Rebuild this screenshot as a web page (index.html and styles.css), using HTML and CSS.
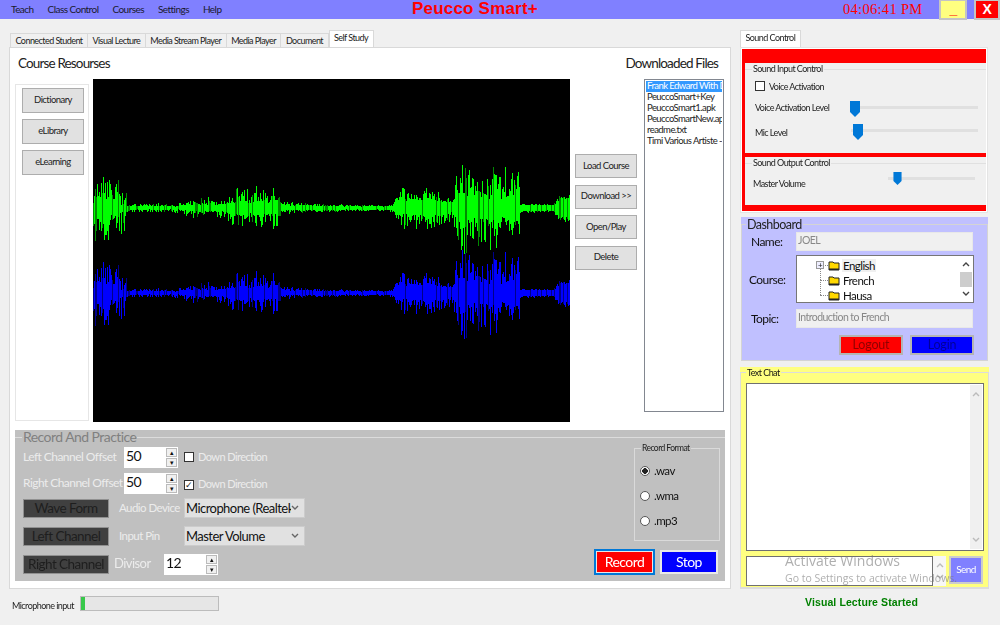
FILE: index.html
```html
<!DOCTYPE html>
<html lang="en">
<head>
    <meta charset="UTF-8">
    <title>Peucco Smart+</title>
    <link rel="stylesheet" href="styles.css">
</head>
<body>
    <svg class="defs" width="0" height="0">
        <symbol id="chev-up" viewBox="0 0 8 6"><path d="M1 5 L4 2 L7 5" fill="none" stroke="currentColor" stroke-width="1.4"/></symbol>
        <symbol id="chev-down" viewBox="0 0 8 6"><path d="M1 1 L4 4 L7 1" fill="none" stroke="currentColor" stroke-width="1.4"/></symbol>
        <symbol id="folder" viewBox="0 0 12 11"><path d="M1 2 H5 L6 3 H11 V10 H1 Z" fill="#ffd800" stroke="#222" stroke-width="1"/><path d="M1 10 H11 V8.5 H1 Z" fill="#222"/></symbol>
        <symbol id="thumb" viewBox="0 0 10 16"><path d="M0 0 H10 V11 L5 16 L0 11 Z" fill="#0078d7"/></symbol>
    </svg>

    <div class="topbar">
        <nav class="menu">
            <span>Teach</span>
            <span>Class Control</span>
            <span>Courses</span>
            <span>Settings</span>
            <span>Help</span>
        </nav>
        <div class="app-title">Peucco Smart+</div>
        <div class="clock">04:06:41 PM</div>
        <button class="win-btn win-min">_</button>
        <button class="win-btn win-close">X</button>
    </div>

    <div class="main">
        <div class="left-col">
            <div class="tabs">
                <span class="tab">Connected Student</span>
                <span class="tab">Visual Lecture</span>
                <span class="tab">Media Stream Player</span>
                <span class="tab">Media Player</span>
                <span class="tab">Document</span>
                <span class="tab active">Self Study</span>
            </div>
            <div class="tab-panel">
                <div class="headings">
                    <span>Course Resourses</span>
                    <span>Downloaded Files</span>
                </div>
                <div class="study-row">
                    <div class="side-box">
                        <button class="btn">Dictionary</button>
                        <button class="btn">eLibrary</button>
                        <button class="btn">eLearning</button>
                    </div>
                    <canvas class="wave" id="wave" width="477" height="343"></canvas>
                    <div class="file-actions">
                        <button class="btn">Load Course</button>
                        <button class="btn">Download &gt;&gt;</button>
                        <button class="btn">Open/Play</button>
                        <button class="btn">Delete</button>
                    </div>
                    <div class="file-list">
                        <div class="file selected">Frank Edward With Dr Sinach</div>
                        <div class="file">PeuccoSmart+Key</div>
                        <div class="file">PeuccoSmart1.apk</div>
                        <div class="file">PeuccoSmartNew.apk</div>
                        <div class="file">readme.txt</div>
                        <div class="file">Timi Various Artiste - Full</div>
                    </div>
                </div>
                <div class="record-wrap">
                    <fieldset class="record">
                        <legend>Record And Practice</legend>
                        <div class="record-left">
                            <div class="rec-row row-offset">
                                <span class="rec-label">Left Channel Offset</span>
                                <div class="spin"><span>50</span><div class="spin-btns"><i>&#9652;</i><i>&#9662;</i></div></div>
                                <span class="check"></span>
                                <span class="rec-label">Down Direction</span>
                            </div>
                            <div class="rec-row row-offset">
                                <span class="rec-label">Right Channel Offset</span>
                                <div class="spin"><span>50</span><div class="spin-btns"><i>&#9652;</i><i>&#9662;</i></div></div>
                                <span class="check checked">&#10003;</span>
                                <span class="rec-label">Down Direction</span>
                            </div>
                            <div class="rec-row row-select">
                                <button class="dark-btn">Wave Form</button>
                                <span class="rec-label">Audio Device</span>
                                <div class="select"><span>Microphone (Realtek</span><svg width="8" height="6"><use href="#chev-down"/></svg></div>
                            </div>
                            <div class="rec-row row-select">
                                <button class="dark-btn">Left Channel</button>
                                <span class="rec-label">Input Pin</span>
                                <div class="select"><span>Master Volume</span><svg width="8" height="6"><use href="#chev-down"/></svg></div>
                            </div>
                            <div class="rec-row row-divisor">
                                <button class="dark-btn">Right Channel</button>
                                <span class="rec-label divisor">Divisor</span>
                                <div class="spin"><span>12</span><div class="spin-btns"><i>&#9652;</i><i>&#9662;</i></div></div>
                            </div>
                        </div>
                        <div class="record-right">
                            <fieldset class="format">
                                <legend>Record Format</legend>
                                <div class="radio-row"><span class="radio on"></span>.wav</div>
                                <div class="radio-row"><span class="radio"></span>.wma</div>
                                <div class="radio-row"><span class="radio"></span>.mp3</div>
                            </fieldset>
                            <div class="rec-actions">
                                <button class="rec-btn rec-red">Record</button>
                                <button class="rec-btn rec-blue">Stop</button>
                            </div>
                        </div>
                    </fieldset>
                </div>
            </div>
            <div class="mic-row">
                <span>Microphone input</span>
                <div class="mic-bar"><div class="mic-fill" style="width: 3%"></div></div>
            </div>
        </div>

        <div class="right-col">
            <div class="tabs">
                <span class="tab active">Sound Control</span>
            </div>
            <div class="sound-panel">
                <div class="sound-red">
                    <div class="sound-group input-group">
                        <fieldset>
                            <legend>Sound Input Control</legend>
                            <div class="voice-row"><span class="check"></span>Voice Activation</div>
                            <div class="slider-row level-row">
                                <span>Voice Activation Level</span>
                                <div class="slider"><svg class="thumb" width="10" height="16"><use href="#thumb"/></svg></div>
                            </div>
                            <div class="slider-row mic-level">
                                <span>Mic Level</span>
                                <div class="slider"><svg class="thumb" width="10" height="16"><use href="#thumb"/></svg></div>
                            </div>
                        </fieldset>
                    </div>
                    <div class="sound-group output-group">
                        <fieldset>
                            <legend>Sound Output Control</legend>
                            <div class="slider-row master-row">
                                <span>Master Volume</span>
                                <div class="slider"><svg class="thumb" width="9" height="13"><use href="#thumb"/></svg></div>
                            </div>
                        </fieldset>
                    </div>
                </div>
            </div>

            <div class="dash-wrap">
                <fieldset class="dashboard">
                    <legend>Dashboard</legend>
                    <div class="dash-row name-row">
                        <span class="dash-label">Name:</span>
                        <div class="dash-input">JOEL</div>
                    </div>
                    <div class="dash-row course-row">
                        <span class="dash-label">Course:</span>
                        <div class="tree">
                            <div class="tree-items">
                                <div class="tree-item"><span class="plus">+</span><svg width="12" height="11"><use href="#folder"/></svg><span class="tree-name hover">English</span></div>
                                <div class="tree-item"><svg width="12" height="11"><use href="#folder"/></svg><span class="tree-name">French</span></div>
                                <div class="tree-item"><svg width="12" height="11"><use href="#folder"/></svg><span class="tree-name">Hausa</span></div>
                            </div>
                            <div class="tree-scroll">
                                <svg width="8" height="6"><use href="#chev-up"/></svg>
                                <div class="tree-thumb"></div>
                                <svg width="8" height="6"><use href="#chev-down"/></svg>
                            </div>
                        </div>
                    </div>
                    <div class="dash-row topic-row">
                        <span class="dash-label">Topic:</span>
                        <div class="dash-input">Introduction to French</div>
                    </div>
                    <div class="dash-actions">
                        <button class="dash-btn logout">Logout</button>
                        <button class="dash-btn login">Login</button>
                    </div>
                </fieldset>
            </div>

            <div class="chat-wrap">
                <fieldset class="chat">
                    <legend>Text Chat</legend>
                    <div class="chat-log">
                        <div class="chat-scroll">
                            <svg width="8" height="6"><use href="#chev-up"/></svg>
                            <svg width="8" height="6"><use href="#chev-down"/></svg>
                        </div>
                    </div>
                    <div class="chat-send">
                        <div class="chat-input"></div>
                        <div class="chat-scroll small">
                            <svg width="8" height="6"><use href="#chev-up"/></svg>
                            <svg width="8" height="6"><use href="#chev-down"/></svg>
                        </div>
                        <button class="send-btn">Send</button>
                    </div>
                </fieldset>
            </div>
            <div class="status">Visual Lecture Started</div>
        </div>
    </div>

    <div class="activate">
        <div class="activate-big">Activate Windows</div>
        <div class="activate-small">Go to Settings to activate Windows.</div>
    </div>

    <script src="script.js"></script>
</body>
</html>
```

FILE: styles.css
```css
* {
    box-sizing: border-box;
}
body {
    font-family: Lato, "Liberation Sans", Arial, sans-serif;
    font-size: 9px;
    letter-spacing: -0.55px;
    background-color: #f0f0f0;
    color: #222;
    margin: 0;
    width: 1000px;
    height: 625px;
    overflow: hidden;
    position: relative;
}
button {
    font-family: inherit;
    letter-spacing: inherit;
    padding: 0 0 2px;
}
fieldset {
    margin: 0;
    min-width: 0;
    border: 1px solid #dcdcdc;
}
legend {
    padding: 0 1px;
}
.defs {
    position: absolute;
}

/* top bar */
.topbar {
    height: 19px;
    background-color: #8080ff;
    display: flex;
    align-items: flex-start;
    position: relative;
}
.menu {
    display: flex;
    gap: 14px;
    padding: 3px 0 0 11px;
    width: 412px;
    font-size: 10px;
    color: #1a1a2e;
}
.app-title {
    font-family: "Liberation Sans", Arial, sans-serif;
    font-weight: bold;
    font-size: 17px;
    letter-spacing: 0.2px;
    color: #f00;
    width: 126px;
    line-height: 18px;
    white-space: nowrap;
}
.clock {
    font-family: "Liberation Serif", serif;
    font-size: 14.5px;
    letter-spacing: 0.3px;
    color: #f00;
    margin-left: 305px;
    line-height: 19px;
    width: 96px;
    white-space: nowrap;
}
.win-btn {
    height: 20px;
    border: 2px solid #c4c4c4;
    border-width: 1px 2px 2px 2px;
    font-family: "Liberation Sans", Arial, sans-serif;
    font-weight: bold;
    font-size: 14px;
    line-height: 16px;
    text-align: center;
}
.win-min {
    width: 28px;
    background-color: #ffff80;
    color: #f00;
}
.win-close {
    width: 26px;
    margin-left: 7px;
    background-color: #f00;
    color: #fff;
}

/* columns */
.main {
    display: flex;
    padding: 11px 0 0 9px;
    gap: 9px;
}
.left-col {
    width: 722px;
}
.right-col {
    width: 249px;
}

/* tabs */
.tabs {
    display: flex;
    align-items: flex-end;
    height: 17px;
    padding-left: 1px;
}
.right-col .tabs {
    padding-left: 0;
}
.tab {
    height: 14px;
    line-height: 13px;
    padding: 0 4.5px;
    background-color: #f0f0f0;
    border: 1px solid #d9d9d9;
    border-width: 1px 1px 0 0;
    white-space: nowrap;
}
.tab:first-child {
    border-left: 1px solid #d9d9d9;
}
.tab.active {
    height: 17px;
    line-height: 13px;
    background-color: #fff;
    border: 1px solid #d9d9d9;
    border-bottom: none;
    padding: 0 4.5px;
}
.tab-panel {
    height: 542px;
    background-color: #fff;
    border: 1px solid #d9d9d9;
    padding: 0 5px;
}
.headings {
    height: 31px;
    display: flex;
    justify-content: space-between;
    align-items: center;
    font-size: 13.5px;
    letter-spacing: -0.85px;
    padding: 0 7px 2px 3px;
}

/* study row */
.study-row {
    display: flex;
    align-items: flex-start;
    height: 343px;
}
.side-box {
    width: 74px;
    height: 337px;
    margin-top: 5px;
    margin-right: 4px;
    border: 1px solid #e6e6e6;
    padding: 3px 0 0 6px;
    display: flex;
    flex-direction: column;
    gap: 6px;
}
.btn {
    width: 62px;
    height: 25px;
    background-color: #e1e1e1;
    border: 1px solid #adadad;
    font-size: 9.5px;
    color: #222;
}
.wave {
    display: block;
    width: 477px;
    height: 343px;
    background-color: #000;
}
.file-actions {
    margin-left: 5px;
    padding-top: 75px;
    display: flex;
    flex-direction: column;
    gap: 6.5px;
}
.file-actions .btn {
    height: 24px;
}
.file-list {
    width: 80px;
    height: 333px;
    margin-left: 7px;
    border: 1px solid #828790;
    padding: 1px;
    overflow: hidden;
    background-color: #fff;
    font-size: 9.5px;
}
.file {
    height: 11px;
    line-height: 10px;
    white-space: nowrap;
    overflow: hidden;
    padding-left: 1px;
}
.file.selected {
    background-color: #3399ff;
    color: #fff;
}

/* record panel */
.record-wrap {
    width: 710px;
    height: 151px;
    margin-top: 8px;
    background-color: #c0c0c0;
}
.record {
    height: 151px;
    padding: 0 5px 0 8px;
    display: flex;
    justify-content: space-between;
    border-color: #dcdcdc;
    border-width: 1px 0 0 0;
}
.record > legend {
    font-size: 14px;
    color: #808080;
    line-height: 14px;
    margin-left: -1px;
}
.record-left {
    width: 300px;
    padding-top: 2px;
}
.rec-row {
    display: flex;
    align-items: center;
}
.rec-label {
    font-size: 11px;
    color: #ececec;
    white-space: nowrap;
    padding-bottom: 2px;
}
.row-offset {
    height: 22px;
    margin-bottom: 4px;
}
.row-offset > .rec-label:first-child {
    width: 101px;
    font-size: 12px;
}
.row-offset .check {
    margin: 0 4px 0 6px;
}
.row-offset .check.checked {
    margin-top: 3px;
}
.checked + .rec-label {
    padding-bottom: 0;
}
.row-select {
    height: 20px;
    margin-bottom: 8px;
}
.row-select .rec-label {
    width: 65px;
    margin-left: 10px;
    font-size: 11.5px;
}
.row-divisor {
    height: 20px;
}
.divisor {
    font-size: 13px;
    margin: 0 14px 0 5px;
    width: 36px;
}
.spin {
    width: 54px;
    height: 21px;
    background-color: #fff;
    display: flex;
    justify-content: space-between;
    font-size: 14px;
    line-height: 18px;
    padding: 0 0 0 2px;
    color: #111;
}
.spin-btns {
    width: 11px;
    margin: 1px 1px 1px 0;
    display: flex;
    flex-direction: column;
    gap: 1px;
}
.spin-btns i {
    flex: 1;
    background-color: #f0f0f0;
    border: 1px solid #bbb;
    font-style: normal;
    font-size: 7px;
    line-height: 7px;
    text-align: center;
}
.check {
    width: 10px;
    height: 10px;
    background-color: #fff;
    border: 1px solid #333;
    font-size: 9px;
    line-height: 8px;
    text-align: center;
    flex: none;
}
.select {
    width: 121px;
    height: 20px;
    background-color: #e1e1e1;
    border: 1px solid #ccc;
    display: flex;
    align-items: center;
    justify-content: space-between;
    padding: 0 5px 0 1px;
    font-size: 13px;
    color: #111;
    white-space: nowrap;
    overflow: hidden;
}
.select span {
    width: 105px;
    overflow: hidden;
}
.select svg {
    color: #666;
    flex: none;
}
.dark-btn {
    width: 86px;
    height: 19px;
    background-color: #404040;
    border: 1px solid #909090;
    font-size: 13.5px;
    color: #1e1e1e;
    white-space: nowrap;
    flex: none;
}
.record-right {
    width: 126px;
    margin-top: -1px;
}
.format {
    width: 86px;
    height: 98px;
    margin: 0 0 0 40px;
    padding: 0 0 0 5px;
    border-color: #dadada;
}
.format legend {
    font-size: 8.5px;
    margin-left: 1px;
}
.radio-row {
    height: 25px;
    display: flex;
    align-items: center;
    gap: 4px;
    font-size: 11.5px;
    color: #111;
}
legend + .radio-row {
    margin-top: 5px;
}
.radio {
    width: 10px;
    height: 10px;
    border-radius: 50%;
    background-color: #fff;
    border: 1px solid #555;
}
.radio.on {
    background-image: radial-gradient(circle, #222 0 2.6px, #fff 3px);
}
.rec-actions {
    display: flex;
    align-items: center;
    gap: 5px;
    margin-top: 8px;
}
.rec-btn {
    height: 24px;
    color: #fff;
    font-size: 14px;
    border: 2px solid #e8e8e8;
}
.rec-red {
    width: 61px;
    height: 26px;
    background-color: #f00;
    border: 2px solid #0078d7;
    outline: 1px solid #e8e8e8;
    outline-offset: -3px;
}
.rec-blue {
    width: 58px;
    background-color: #00f;
}

/* mic */
.mic-row {
    display: flex;
    align-items: center;
    height: 15px;
    margin-top: 7px;
    padding-left: 3px;
}
.mic-row span {
    width: 68px;
    white-space: nowrap;
    padding-top: 3px;
}
.mic-bar {
    width: 139px;
    height: 15px;
    background-color: #e6e6e6;
    border: 1px solid #bcbcbc;
}
.mic-fill {
    height: 100%;
    background-color: #37c84a;
}

/* sound control */
.sound-panel {
    height: 166px;
    width: 248px;
    background-color: #fff;
    border: 1px solid #e4e4e4;
    padding: 1px;
}
.sound-red {
    background-color: #f00;
    height: 162px;
    padding: 14px 0 0 3px;
}
.sound-group {
    background-color: #f0f0f0;
    width: 241px;
}
.input-group {
    height: 90px;
    margin-bottom: 4px;
}
.output-group {
    height: 48px;
}
.sound-group fieldset {
    height: 100%;
    padding: 0 0 0 7px;
    border-width: 1px 0 0 0;
    border-color: #e0e0e0;
}
.sound-group legend {
    line-height: 12px;
}
.voice-row {
    display: flex;
    align-items: center;
    gap: 4px;
    height: 14px;
    margin: 4px 0 0 3px;
}
.slider-row {
    display: flex;
    align-items: center;
    height: 16px;
    position: relative;
    margin-left: 3px;
}
.slider-row > span {
    flex: none;
    white-space: nowrap;
}
.level-row {
    margin-top: 6px;
}
.level-row > span {
    width: 95px;
}
.mic-level {
    margin-top: 9px;
}
.mic-level > span {
    width: 95px;
}
.slider {
    height: 3px;
    background-color: #e0e0e0;
    flex: none;
    width: 128px;
    position: relative;
}
.thumb {
    position: absolute;
    top: -5px;
    left: 0;
}
.mic-level .thumb {
    left: 2px;
}
.mic-level .slider {
    width: 127px;
    margin: -3px 0 0 1px;
}
.master-row {
    margin: 6px 0 0 1px;
}
.master-row > span {
    width: 135px;
}
.master-row .slider {
    width: 87px;
    margin-top: -10px;
}
.master-row .thumb {
    left: 5px;
    top: -5px;
}

/* dashboard */
.dash-wrap {
    width: 247px;
    height: 144px;
    margin: 4px 0 0 1px;
    background-color: #c0c0ff;
    padding-top: 1px;
}
.dashboard {
    height: 143px;
    padding: 0 0 0 8px;
    border-color: #d4d4d4;
}
.dashboard legend {
    font-size: 12.5px;
    line-height: 13px;
    margin-left: -4px;
}
.dash-row {
    display: flex;
    align-items: center;
}
.dash-label {
    width: 46px;
    padding-left: 1px;
    font-size: 12px;
    color: #111;
}
.dash-input {
    width: 177px;
    height: 19px;
    background-color: #f0f0f0;
    border: 1px solid #e8e8e8;
    color: #888;
    font-size: 10.5px;
    line-height: 15px;
    padding-left: 1px;
}
.name-row {
    margin-top: 1px;
}
.course-row {
    margin-top: 4px;
}
.course-row .dash-label {
    margin-left: -2px;
    width: 48px;
}
.tree {
    width: 178px;
    height: 48px;
    background-color: #fff;
    border: 1px solid #767676;
    display: flex;
    justify-content: space-between;
    overflow: hidden;
}
.tree-items {
    padding: 2px 0 0 31px;
    font-size: 11.5px;
    position: relative;
}
.tree-item {
    height: 15px;
    display: flex;
    align-items: center;
    gap: 2px;
    position: relative;
    color: #111;
}
.tree-item::before {
    content: "";
    position: absolute;
    left: -8px;
    top: 7px;
    width: 8px;
    border-top: 1px dotted #888;
}
.tree-item:not(:first-child)::after {
    content: "";
    position: absolute;
    left: -8px;
    top: -8px;
    height: 15px;
    border-left: 1px dotted #888;
}
.plus {
    position: absolute;
    left: -12px;
    top: 3px;
    width: 8px;
    height: 8px;
    border: 1px solid #999;
    background-color: #eef;
    font-size: 8px;
    line-height: 6px;
    text-align: center;
    z-index: 1;
}
.tree-name {
    padding: 0 1px;
}
.tree-name.hover {
    background-color: #f0f0f0;
}
.tree-scroll {
    width: 12px;
    margin: 1px 1px 1px 0;
    display: flex;
    flex-direction: column;
    align-items: center;
    justify-content: space-between;
    padding: 4px 0;
    color: #444;
}
.tree-thumb {
    width: 100%;
    height: 15px;
    background-color: #cdcdcd;
}
.topic-row {
    margin-top: 6px;
}
.dash-actions {
    display: flex;
    gap: 7px;
    margin: 7px 0 0 89px;
}
.dash-btn {
    width: 64px;
    height: 20px;
    border: 2px solid #b4b4b4;
    font-size: 12.5px;
    letter-spacing: -0.2px;
}
.logout {
    background-color: #f00;
    color: #900000;
}
.login {
    background-color: #00f;
    color: #00009a;
}

/* chat */
.chat-wrap {
    width: 249px;
    height: 222px;
    margin-top: 6px;
    background-color: #ffff80;
}
.chat {
    height: 222px;
    padding: 0 0 0 5px;
    border-color: #dcdcdc;
    border-width: 1px 1px 2px 1px;
}
.chat legend {
    line-height: 11px;
    margin-left: 0;
    color: #111;
}
.chat-log {
    width: 238px;
    height: 168px;
    margin-top: 5px;
    background-color: #fff;
    border: 1px solid #707070;
    display: flex;
    justify-content: flex-end;
    padding: 1px;
}
.chat-scroll {
    width: 12px;
    background-color: #f0f0f0;
    display: flex;
    flex-direction: column;
    align-items: center;
    justify-content: space-between;
    padding: 6px 0;
    color: #bbb;
}
.chat-send {
    display: flex;
    margin-top: 5px;
}
.chat-input {
    width: 187px;
    height: 30px;
    background-color: #fff;
    border: 1px solid #707070;
}
.chat-scroll.small {
    width: 13px;
    height: 30px;
    background-color: #f7f7f7;
    margin-right: 3px;
}
.send-btn {
    width: 34px;
    height: 28px;
    background-color: #8080ff;
    border: 2px solid #ccc;
    color: #fff;
    font-size: 10px;
}
.status {
    margin: 7px 6px 0 0;
    text-align: center;
    font-family: "Liberation Sans", Arial, sans-serif;
    font-weight: bold;
    font-size: 10.5px;
    letter-spacing: 0.1px;
    color: #008000;
    line-height: 12px;
}

/* watermark */
.activate {
    position: absolute;
    left: 785px;
    top: 552px;
    font-family: "Open Sans", "Liberation Sans", sans-serif;
    letter-spacing: 0;
    color: rgba(120, 120, 120, 0.6);
    white-space: nowrap;
    pointer-events: none;
}
.activate-big {
    font-size: 14px;
    line-height: 17px;
}
.activate-small {
    font-size: 10.5px;
    line-height: 13px;
    margin-top: 3px;
}
```

FILE: script.js
```js
// waveform is drawn from an envelope: [x, peak, core] in canvas pixels
const envelope = [
    [0, 34, 6], [6, 36, 11], [20, 36, 11], [27, 30, 5], [34, 24, 3], [36, 5, 2],
    [85, 5, 2], [90, 9, 3], [125, 14, 4], [132, 10, 4], [137, 22, 7], [185, 24, 8],
    [188, 8, 3], [205, 6, 3], [245, 4, 2], [295, 3, 2], [300, 6, 3],
    [304, 22, 8], [330, 24, 11], [355, 16, 7], [360, 12, 6], [364, 52, 14],
    [380, 42, 16], [405, 46, 12], [425, 50, 15], [427, 6, 4], [460, 4, 3],
    [465, 14, 10], [477, 16, 14]
];

function amplitudeAt(x, index) {
    for (let i = 1; i < envelope.length; i++) {
        if (x <= envelope[i][0]) {
            const a = envelope[i - 1];
            const b = envelope[i];
            const t = (x - a[0]) / (b[0] - a[0]);
            return a[index] + (b[index] - a[index]) * t;
        }
    }
    return 0;
}

function drawChannel(ctx, centerY, bright, dim, seed) {
    let value = seed;
    function random() {
        value = (value * 16807) % 2147483647;
        return value / 2147483647;
    }
    for (let x = 0; x < 477; x++) {
        const peak = amplitudeAt(x, 1);
        const core = amplitudeAt(x, 2);
        const r1 = random();
        const r2 = random();
        const up = core * (0.65 + 0.35 * random()) + (peak - core) * Math.pow(r1, 2);
        const down = core * (0.65 + 0.35 * random()) + (peak - core) * Math.pow(r2, 2);
        ctx.fillStyle = random() > 0.85 ? dim : bright;
        ctx.fillRect(x, Math.round(centerY - up), 1, Math.round(up + down));
    }
}

const ctx = document.getElementById('wave').getContext('2d');
drawChannel(ctx, 129, '#00ff00', '#008a00', 4711);
drawChannel(ctx, 214, '#0000ff', '#00008a', 4711);
```
